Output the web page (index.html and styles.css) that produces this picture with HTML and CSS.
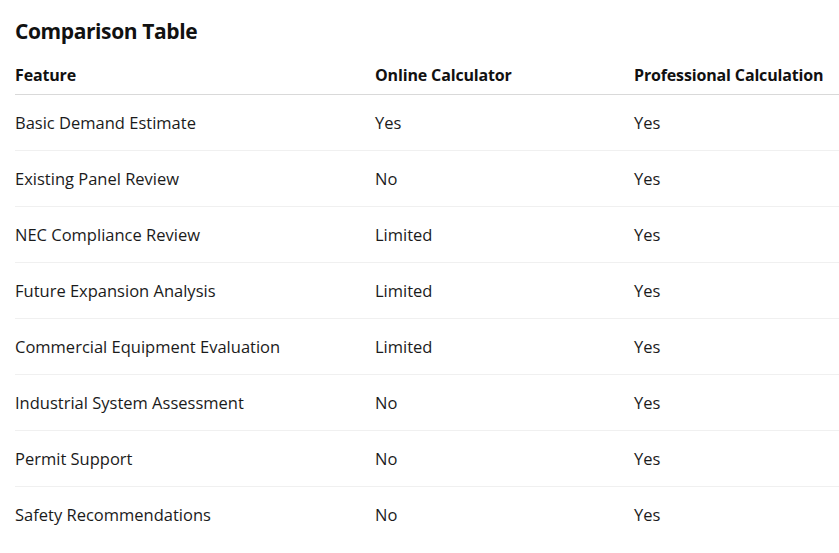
FILE: index.html
```html
<!DOCTYPE html>
<html lang="en">
<head>
<meta charset="utf-8">
<title>Comparison Table</title>
<link rel="stylesheet" href="styles.css">
</head>
<body>
<main class="page">
  <h2 class="title">Comparison Table</h2>
  <table class="cmp">
    <colgroup>
      <col class="c1"><col class="c2"><col class="c3">
    </colgroup>
    <thead>
      <tr><th>Feature</th><th>Online Calculator</th><th>Professional Calculation</th></tr>
    </thead>
    <tbody>
      <tr><td>Basic Demand Estimate</td><td>Yes</td><td>Yes</td></tr>
      <tr><td>Existing Panel Review</td><td>No</td><td>Yes</td></tr>
      <tr><td>NEC Compliance Review</td><td>Limited</td><td>Yes</td></tr>
      <tr><td>Future Expansion Analysis</td><td>Limited</td><td>Yes</td></tr>
      <tr><td>Commercial Equipment Evaluation</td><td>Limited</td><td>Yes</td></tr>
      <tr><td>Industrial System Assessment</td><td>No</td><td>Yes</td></tr>
      <tr><td>Permit Support</td><td>No</td><td>Yes</td></tr>
      <tr><td>Safety Recommendations</td><td>No</td><td>Yes</td></tr>
    </tbody>
  </table>
</main>
</body>
</html>
```

FILE: styles.css
```css
html, body {
  margin: 0;
  padding: 0;
  background: #ffffff;
}
body {
  font-family: "Open Sans", "Noto Sans", "Liberation Sans", sans-serif;
  color: #1b1b1b;
}
.page {
  padding: 16px 0 0 15px;
}
.title {
  margin: 0 0 9px 0;
  font-size: 21px;
  line-height: 30px;
  font-weight: 700;
  letter-spacing: -0.4px;
  color: #111111;
}
.cmp {
  border-collapse: collapse;
  width: 824px;
  table-layout: fixed;
}
.c1 { width: 360px; }
.c2 { width: 259px; }
.c3 { width: 205px; }
.cmp th {
  text-align: left;
  font-size: 16px;
  line-height: 24px;
  font-weight: 700;
  letter-spacing: -0.15px;
  padding: 8px 0 7px 0;
  border-bottom: 1px solid #d9d9d9;
  color: #111111;
  white-space: nowrap;
}
.cmp td {
  font-size: 16.5px;
  line-height: 24px;
  padding: 16px 0 15px 0;
  border-bottom: 1px solid #f0f0f0;
  white-space: nowrap;
}
.cmp tbody tr:last-child td {
  border-bottom: none;
}
```
